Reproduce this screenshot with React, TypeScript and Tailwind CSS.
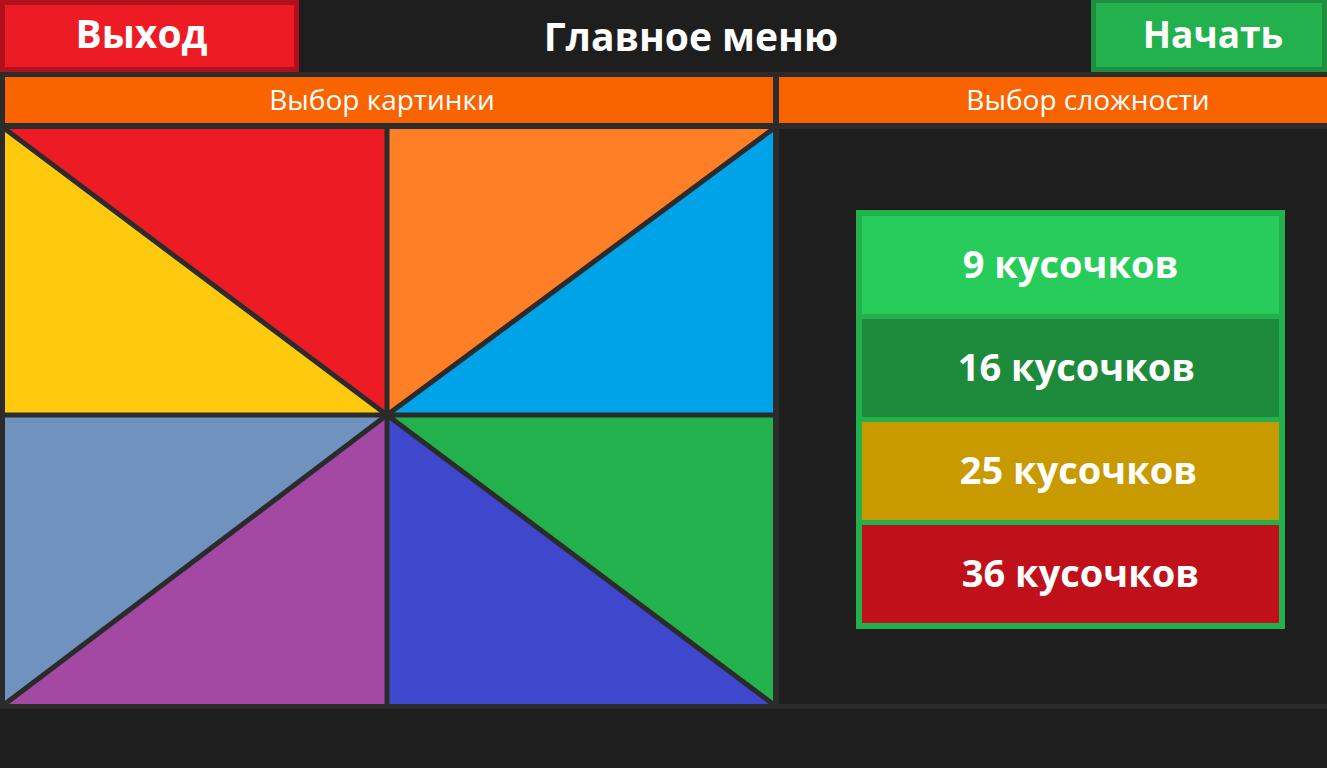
import React from "react";

const font = { fontFamily: '"Open Sans", "Noto Sans", "Liberation Sans", sans-serif' };

function Picture() {
  const cx = 382;
  const cy = 286;
  const w = 768;
  const h = 575;
  const line = "#2b2b2b";
  return (
    <svg width={w} height={h} viewBox={`0 0 ${w} ${h}`} className="block">
      <polygon points={`0,0 ${cx},0 ${cx},${cy}`} fill="#ed1c24" />
      <polygon points={`0,0 0,${cy} ${cx},${cy}`} fill="#ffc90e" />
      <polygon points={`${cx},0 ${w},0 ${cx},${cy}`} fill="#ff7f27" />
      <polygon points={`${w},0 ${w},${cy} ${cx},${cy}`} fill="#00a2e8" />
      <polygon points={`0,${cy} ${cx},${cy} 0,${h}`} fill="#7092be" />
      <polygon points={`${cx},${cy} ${cx},${h} 0,${h}`} fill="#a349a4" />
      <polygon points={`${cx},${cy} ${w},${cy} ${w},${h}`} fill="#22b14c" />
      <polygon points={`${cx},${cy} ${cx},${h} ${w},${h}`} fill="#3f48cc" />
      <g stroke={line} strokeWidth={5}>
        <line x1={cx} y1={0} x2={cx} y2={h} />
        <line x1={0} y1={cy} x2={w} y2={cy} />
        <line x1={0} y1={0} x2={cx} y2={cy} />
        <line x1={w} y1={0} x2={cx} y2={cy} />
        <line x1={0} y1={h} x2={cx} y2={cy} />
        <line x1={w} y1={h} x2={cx} y2={cy} />
      </g>
    </svg>
  );
}

export default function App() {
  const items = [
    { label: "9 кусочков", cls: "bg-[#27cc5a]", off: "ml-0" },
    { label: "16 кусочков", cls: "bg-[#1e8b3c]", off: "ml-[12px]" },
    { label: "25 кусочков", cls: "bg-[#c99a00]", off: "ml-[16px]" },
    { label: "36 кусочков", cls: "bg-[#c0111a]", off: "ml-[20px]" },
  ];
  return (
    <div className="w-full h-[768px] bg-[#1e1e1e] flex flex-col overflow-hidden" style={font}>
      <div className="h-[72px] flex items-stretch shrink-0">
        <div className="w-[299px] bg-[#ed1c24] border-[5px] border-[#b0111c] flex items-center justify-center">
          <span className="text-white font-bold text-[39px] leading-none -mt-[8px] -ml-[16px]">Выход</span>
        </div>
        <div className="flex-1 flex items-center justify-center">
          <span className="text-white font-bold text-[39px] leading-none -mt-[1px] ml-[-8px]">Главное меню</span>
        </div>
        <div className="w-[236px] bg-[#22b14c] border-[5px] border-t-[3px] border-[#1f8e3f] flex items-center justify-center">
          <span className="text-white font-bold text-[37px] leading-none -mt-[4px] ml-[8px]">Начать</span>
        </div>
      </div>
      <div className="bg-[#2b2b2b] pt-[5px] pl-[5px] pb-[5px] grid grid-cols-[768px_1fr] grid-rows-[46px_575px] gap-[6px] shrink-0">
        <div className="bg-[#f96400] flex items-center justify-center pr-[14px]">
          <span className="text-white text-[28px] leading-none -mt-[3px]">Выбор картинки</span>
        </div>
        <div className="bg-[#f96400] flex items-center justify-center pl-[70px]">
          <span className="text-white text-[28px] leading-none -mt-[3px]">Выбор сложности</span>
        </div>
        <div className="overflow-hidden">
          <Picture />
        </div>
        <div className="bg-[#1e1e1e] pt-[81px] pl-[77px]">
          <div className="w-[429px] h-[419px] bg-[#22b14c] p-[6px] flex flex-col gap-[5px]">
            {items.map((it) => (
              <div key={it.label} className={`flex-1 ${it.cls} flex items-center justify-center`}>
                <span className={`text-white font-bold text-[38px] leading-none -mt-[4px] ${it.off}`}>{it.label}</span>
              </div>
            ))}
          </div>
        </div>
      </div>
      <div className="flex-1 bg-[#1e1e1e]" />
    </div>
  );
}
